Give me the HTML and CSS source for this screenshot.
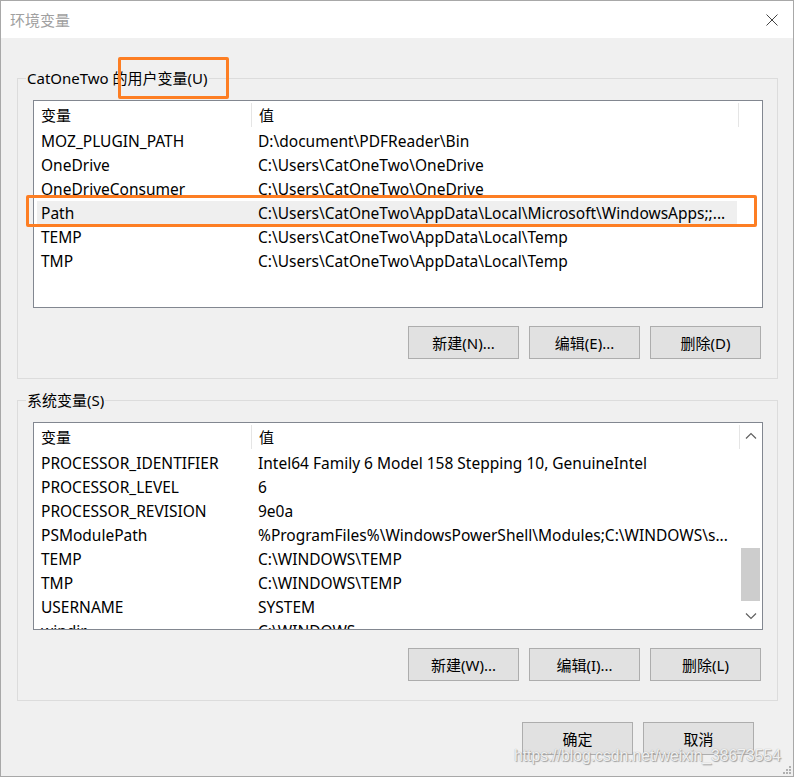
FILE: index.html
```html
<!DOCTYPE html>
<html lang="zh-CN">
<head>
<meta charset="utf-8">
<title>环境变量</title>
<link rel="stylesheet" href="styles.css">
</head>
<body>
<div class="window">
  <div class="titlebar">
    <span class="title">环境变量</span>
    <svg class="close" width="12" height="12" viewBox="0 0 12 12"><path d="M0.5 0.5 L11.5 11.5 M11.5 0.5 L0.5 11.5" stroke="#444" stroke-width="1" fill="none"/></svg>
  </div>
  <div class="content">
    <fieldset class="group">
      <legend class="legend">CatOneTwo 的用户变量(U)</legend>
      <div class="list">
        <div class="row head">
          <div class="c1">变量</div>
          <div class="c2">值</div>
          <div class="c3"></div>
        </div>
        <div class="row"><div class="c1">MOZ_PLUGIN_PATH</div><div class="c2">D:\document\PDFReader\Bin</div></div>
        <div class="row"><div class="c1">OneDrive</div><div class="c2">C:\Users\CatOneTwo\OneDrive</div></div>
        <div class="row"><div class="c1">OneDriveConsumer</div><div class="c2">C:\Users\CatOneTwo\OneDrive</div></div>
        <div class="row sel"><div class="c1">Path</div><div class="c2">C:\Users\CatOneTwo\AppData\Local\Microsoft\WindowsApps;;...</div></div>
        <div class="row"><div class="c1">TEMP</div><div class="c2">C:\Users\CatOneTwo\AppData\Local\Temp</div></div>
        <div class="row"><div class="c1">TMP</div><div class="c2">C:\Users\CatOneTwo\AppData\Local\Temp</div></div>
        <div class="mark mark-path"></div>
      </div>
      <div class="buttons">
        <button class="btn">新建(N)...</button>
        <button class="btn">编辑(E)...</button>
        <button class="btn">删除(D)</button>
      </div>
      <div class="mark mark-legend"></div>
    </fieldset>

    <fieldset class="group group2">
      <legend class="legend">系统变量(S)</legend>
      <div class="list list2">
        <div class="rows">
          <div class="row head">
            <div class="c1">变量</div>
            <div class="c2">值</div>
          </div>
          <div class="row"><div class="c1">PROCESSOR_IDENTIFIER</div><div class="c2">Intel64 Family 6 Model 158 Stepping 10, GenuineIntel</div></div>
          <div class="row"><div class="c1">PROCESSOR_LEVEL</div><div class="c2">6</div></div>
          <div class="row"><div class="c1">PROCESSOR_REVISION</div><div class="c2">9e0a</div></div>
          <div class="row"><div class="c1">PSModulePath</div><div class="c2">%ProgramFiles%\WindowsPowerShell\Modules;C:\WINDOWS\s...</div></div>
          <div class="row"><div class="c1">TEMP</div><div class="c2">C:\WINDOWS\TEMP</div></div>
          <div class="row"><div class="c1">TMP</div><div class="c2">C:\WINDOWS\TEMP</div></div>
          <div class="row"><div class="c1">USERNAME</div><div class="c2">SYSTEM</div></div>
          <div class="row"><div class="c1">windir</div><div class="c2">C:\WINDOWS</div></div>
        </div>
        <div class="scrollbar">
          <svg class="arrow" width="12" height="8" viewBox="0 0 12 8"><path d="M1 6.5 L6 1.5 L11 6.5" stroke="#606060" stroke-width="1.2" fill="none"/></svg>
          <div class="track"><div class="thumb"></div></div>
          <svg class="arrow" width="12" height="8" viewBox="0 0 12 8"><path d="M1 1.5 L6 6.5 L11 1.5" stroke="#606060" stroke-width="1.2" fill="none"/></svg>
        </div>
      </div>
      <div class="buttons">
        <button class="btn">新建(W)...</button>
        <button class="btn">编辑(I)...</button>
        <button class="btn">删除(L)</button>
      </div>
    </fieldset>

    <div class="footer">
      <button class="btn">确定</button>
      <button class="btn">取消</button>
    </div>
    <div class="watermark">https://blog.csdn.net/weixin_38673554</div>
    <svg class="grip" width="9" height="9" viewBox="0 0 9 9"><g fill="#b0b0b0"><rect x="6" y="0" width="2" height="2"/><rect x="3" y="3" width="2" height="2"/><rect x="6" y="3" width="2" height="2"/><rect x="0" y="6" width="2" height="2"/><rect x="3" y="6" width="2" height="2"/><rect x="6" y="6" width="2" height="2"/></g></svg>
  </div>
</div>
</body>
</html>
```
FILE: styles.css
```css
* { box-sizing: border-box; }
html, body { margin: 0; padding: 0; }
body {
  width: 794px;
  height: 777px;
  background: #f0f0f0;
  font-family: "Noto Sans", "Noto Sans CJK SC", sans-serif;
  font-size: 15px;
  color: #000;
}
.window {
  width: 794px;
  height: 777px;
  border: 1px solid #a8a8a8;
  display: flex;
  flex-direction: column;
  background: #f0f0f0;
}
.titlebar {
  height: 37px;
  flex: none;
  background: #fff;
  display: flex;
  align-items: center;
  justify-content: space-between;
  padding: 0 15px 0 9px;
}
.title {
  color: #a0a0a0;
  font-size: 15px;
  font-family: "Noto Sans CJK SC", sans-serif;
  line-height: 20px;
}
.close { display: block; }
.content {
  position: relative;
  flex: 1;
  padding: 30px 15px 0 16px;
  background: #f0f0f0;
}
.group {
  position: relative;
  margin: 0;
  border: 1px solid #dcdcdc;
  padding: 12px 14px 19px 15px;
  min-width: 0;
}
.group2 { margin-top: 11px; }
.legend {
  margin-left: -7px;
  padding: 0 1px;
  line-height: 20px;
  height: 20px;
}
.list {
  position: relative;
  height: 208px;
  border: 1px solid #828790;
  background: #fff;
}
.list2 { display: flex; overflow: hidden; }
.rows { flex: 1; min-width: 0; }
.row {
  display: flex;
  height: 24px;
  line-height: 24px;
  white-space: nowrap;
  margin-left: 3px;
  font-size: 15.5px;
}
.row.head {
  height: 28px;
  line-height: 28px;
  margin-left: 0;
  padding-left: 3px;
  font-size: 15px;
}
.row .c1 {
  width: 214px;
  flex: none;
  padding-left: 4px;
}
.row .c2 {
  flex: 1;
  padding-left: 7px;
  overflow: hidden;
}
.row.head .c2 { border-left: 1px solid #e5e5e5; margin: 2px 0; line-height: 24px; }
.row.head .c1 { line-height: 28px; }
.list > .row.head .c2 { flex: none; width: 487px; }
.row.head .c3 { flex: 1; border-left: 1px solid #e5e5e5; margin: 2px 0; }
.list2 .row.head .c2 { flex: 1; border-right: 1px solid #e5e5e5; }
.row.sel {
  background: #efefef;
  width: 700px;
}
.scrollbar {
  width: 22px;
  flex: none;
  display: flex;
  flex-direction: column;
  align-items: center;
  background: #fff;
  padding: 0 2px 0 1px;
}
.arrow { margin: 9px 0; flex: none; }
.track {
  flex: 1;
  width: 100%;
}
.thumb {
  margin-top: 99px;
  height: 53px;
  width: 19px;
  background: #cdcdcd;
}
.buttons {
  display: flex;
  justify-content: flex-end;
  gap: 10px;
  margin-top: 18px;
  padding-right: 2px;
}
.btn {
  width: 111px;
  height: 33px;
  margin: 0;
  padding: 0;
  background: #e1e1e1;
  border: 1px solid #adadad;
  font-family: "Noto Sans", "Noto Sans CJK SC", sans-serif;
  font-size: 15px;
  color: #000;
  line-height: 20px;
}
.footer {
  display: flex;
  justify-content: flex-end;
  gap: 10px;
  margin-top: 21px;
  padding-right: 24px;
}
.mark {
  position: absolute;
  border: 3px solid #fd7e23;
  border-radius: 2px;
  pointer-events: none;
}
.mark-legend {
  left: 100px;
  top: -31px;
  width: 111px;
  height: 42px;
}
.mark-path {
  left: -8px;
  top: 94px;
  width: 731px;
  height: 32px;
}
.watermark {
  position: absolute;
  left: 513px;
  top: 709px;
  font-family: "Liberation Sans", sans-serif;
  font-size: 15.7px;
  color: rgba(255,255,255,0.85);
  text-shadow: 0 0 1px #9a9a9a, 1px 1px 1px #a0a0a0;
  white-space: nowrap;
  pointer-events: none;
}
.grip {
  position: absolute;
  right: 1px;
  bottom: 1px;
}
```
